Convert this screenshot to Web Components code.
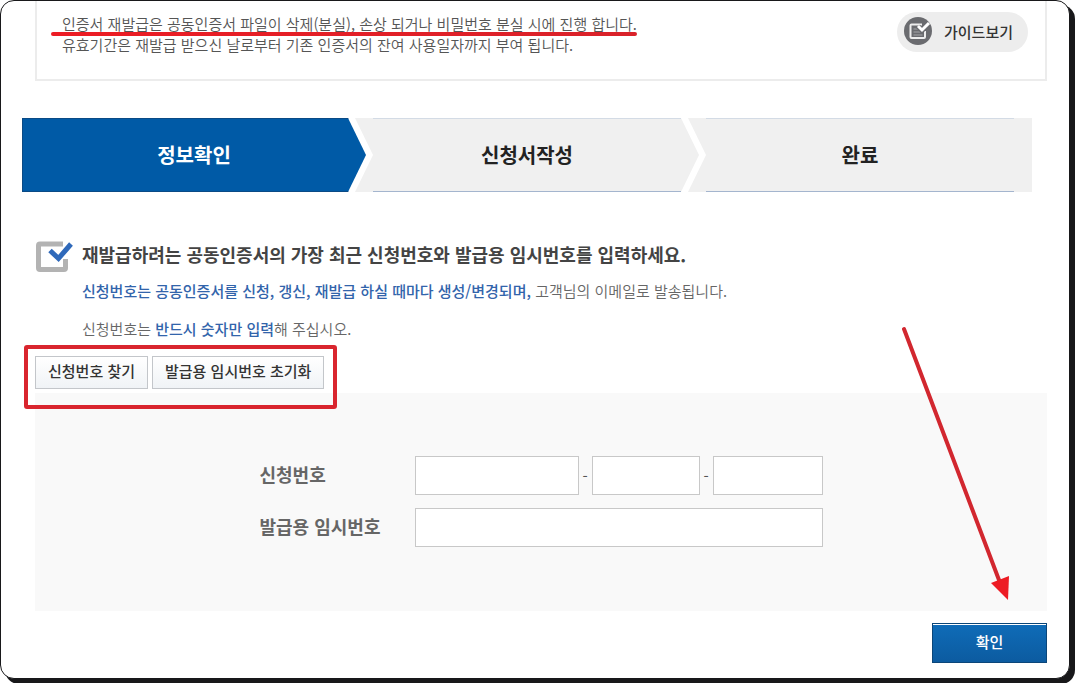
<!DOCTYPE html>
<html lang="ko">
<head>
<meta charset="utf-8">
<meta name="viewport" content="width=device-width, initial-scale=1">
<title>인증서 재발급</title>
<style>
  html { background: #fff; }
  body { margin: 0; font-family: "Noto Sans CJK KR", "Noto Sans", sans-serif; font-size: 15px; line-height: 21px; color: #555; }
</style>
</head>
<body>
<page-sheet>
  <notice-box>
    <marked-line>인증서 재발급은 공동인증서 파일이 삭제(분실), 손상 되거나 비밀번호 분실 시에 진행 합니다.</marked-line>
    <span>유효기간은 재발급 받으신 날로부터 기존 인증서의 잔여 사용일자까지 부여 됩니다.</span>
    <guide-button slot="action">가이드보기</guide-button>
  </notice-box>
  <step-bar>
    <step-item current>정보확인</step-item>
    <step-item>신청서작성</step-item>
    <step-item last>완료</step-item>
  </step-bar>
  <section-intro>
    <span slot="title">재발급하려는 공동인증서의 가장 최근 신청번호와 발급용 임시번호를 입력하세요.</span>
    <span slot="first"><key-text>신청번호는 공동인증서를 신청, 갱신, 재발급 하실 때마다 생성/변경되며,</key-text> 고객님의 이메일로 발송됩니다.</span>
    <span slot="second">신청번호는 <key-text>반드시 숫자만 입력</key-text>해 주십시오.</span>
  </section-intro>
  <tool-group>
    <tool-button>신청번호 찾기</tool-button>
    <tool-button>발급용 임시번호 초기화</tool-button>
  </tool-group>
  <number-form></number-form>
  <confirm-bar>확인</confirm-bar>
</page-sheet>

<script>
const define = (name, html) => {
  const template = document.createElement('template');
  template.innerHTML = html;
  customElements.define(name, class extends HTMLElement {
    constructor() {
      super();
      this.attachShadow({ mode: 'open' }).append(template.content.cloneNode(true));
    }
  });
};

define('page-sheet', `
  <style>
    :host { display: block; box-sizing: border-box; margin: 0 5px 5px 0; padding: 0 22px 15px 21px;
      border: 1px solid #18181a; border-radius: 14px; background: #fff; box-shadow: 5px 5px 0 #18181a; }
  </style>
  <slot></slot>`);

define('notice-box', `
  <style>
    :host { display: flex; align-items: flex-start; justify-content: space-between; box-sizing: border-box;
      min-height: 80px; margin-left: 13px; padding: 11px 17px 11px 25px; border: 2px solid #ececec; border-top: 0; }
    p { display: flex; flex-direction: column; margin: 1px 0 0; font-weight: 350; }
  </style>
  <p><slot></slot></p>
  <slot name="action"></slot>`);

define('marked-line', `
  <style>
    :host { display: block; position: relative; }
    i { position: absolute; left: -11px; right: 0; bottom: -2px; height: 4px; border-radius: 2px;
      background: linear-gradient(90deg, #ed1c24, #d9222a); }
  </style>
  <slot></slot><i></i>`);

define('guide-button', `
  <style>
    :host { display: block; }
    button { display: flex; align-items: center; gap: 12px; height: 40px; padding: 0 15px 2px 7px; border: 0;
      border-radius: 20px; background: #ededed; color: #333; font: inherit; font-weight: 500; cursor: pointer; }
    svg { display: block; }
  </style>
  <button type="button">
    <svg width="28" height="28" viewBox="0 0 28 28" aria-hidden="true">
      <circle cx="14" cy="14" r="14" fill="#6a6b6f"/>
      <path d="M18 7.500H7.500Q6.500 7.500 6.500 8.500V20Q6.500 21 7.500 21H20Q21 21 21 20V14" fill="none" stroke="#ededed" stroke-width="2"/>
      <path d="M9.500 12h5M9.500 15h7M9.500 18h9" stroke="#a5a6a9" stroke-width="1"/>
      <path d="M14 9.500L18 13.500L25 6.500" fill="none" stroke="#6a6b6f" stroke-width="5"/>
      <path d="M14 9L18 13L25 6" fill="none" stroke="#fff" stroke-width="3"/>
    </svg>
    <slot></slot>
  </button>`);

define('step-bar', `
  <style>
    :host { display: flex; height: 74px; margin: 37px 15px 0 0; }
  </style>
  <slot></slot>`);

define('step-item', `
  <style>
    :host { --tip: 18px; position: relative; flex: 1 1 0; display: flex; align-items: center; justify-content: center;
      margin-left: -11px; background: #f0f0f0; color: #222; font-size: 20px; font-weight: 700; line-height: 28px;
      clip-path: polygon(0 0, calc(100% - var(--tip)) 0, 100% 50%, calc(100% - var(--tip)) 100%, 0 100%, var(--tip) 50%); }
    :host([current]) { margin-left: 0; background: #005aa6; color: #fff;
      clip-path: polygon(0 0, calc(100% - var(--tip)) 0, 100% 50%, calc(100% - var(--tip)) 100%, 0 100%); }
    :host([last]) { clip-path: polygon(0 0, 100% 0, 100% 100%, 0 100%, var(--tip) 50%); }
    i { position: absolute; inset: 0 var(--tip); border: solid; border-width: 1px 0; border-color: #d3dbe5 transparent #a4b5ce; }
    :host([current]) i { inset: 0; border-width: 1px 0 1px 1px; border-color: #0a4a85; }
  </style>
  <i></i><slot></slot>`);

define('section-intro', `
  <style>
    :host { display: grid; grid-template-columns: 37px 1fr; column-gap: 9px; margin: 48px 0 0 14px; }
    svg { display: block; margin-top: 1px; }
    h2 { margin: 0 0 12px; font-size: 18px; font-weight: 700; line-height: 28px; color: #444; }
    p { margin: 0; font-weight: 350; line-height: 21px; color: #666; }
    p + p { margin-top: 17px; }
  </style>
  <svg width="37" height="32" viewBox="0 0 37 32" aria-hidden="true">
    <path d="M27 3H4Q2.500 3 2.500 4.500V27Q2.500 28.500 4 28.500H28Q29.500 28.500 29.500 27V18" fill="none" stroke="#b3b3b3" stroke-width="5"/>
    <path d="M14 9.500L22.500 17.500L35 3" fill="none" stroke="#fff" stroke-width="8"/>
    <path d="M14 9.500L22.500 17.500L35 3" fill="none" stroke="#2f69ba" stroke-width="5"/>
  </svg>
  <div>
    <h2><slot name="title"></slot></h2>
    <p><slot name="first"></slot></p>
    <p><slot name="second"></slot></p>
  </div>`);

define('key-text', `
  <style>:host { display: inline; font-weight: 500; color: #3264ab; }</style><slot></slot>`);

define('tool-group', `
  <style>
    :host { display: flex; gap: 4px; position: relative; width: fit-content; margin: 17px 0 0 13px; }
    i { position: absolute; inset: -11px -13px -20px -11px; border: 4px solid #d9252e; border-radius: 3px; pointer-events: none; }
  </style>
  <slot></slot><i></i>`);

define('tool-button', `
  <style>
    :host { display: block; }
    button { height: 33px; padding: 0 12px 4px; border: 1px solid #c3c6ca; background: linear-gradient(#fff, #f0f3f6);
      color: #333; font: inherit; font-weight: 500; line-height: 21px; cursor: pointer; }
  </style>
  <button type="button"><slot></slot></button>`);

define('number-form', `
  <style>
    :host { display: block; margin: 4px 0 0 13px; padding: 63px 0 64px; background: #f9f9f9; }
    form { display: grid; grid-template-columns: 155px 408px; row-gap: 13px; justify-content: center; align-items: center; }
    label { padding-bottom: 3px; font-size: 18px; font-weight: 700; line-height: 28px; color: #666; }
    div { display: grid; grid-template-columns: 164px 13px 108px 13px 110px; align-items: center; text-align: center; }
    input { box-sizing: border-box; width: 100%; height: 39px; padding: 0 10px; border: 1px solid #c8c8c8; border-radius: 0;
      background: #fff; font: inherit; color: #333; }
  </style>
  <form>
    <label for="request">신청번호</label>
    <div>
      <input id="request" type="text" inputmode="numeric"><span>-</span>
      <input type="text" inputmode="numeric" aria-label="신청번호 둘째 자리"><span>-</span>
      <input type="text" inputmode="numeric" aria-label="신청번호 셋째 자리">
    </div>
    <label for="temporary">발급용 임시번호</label>
    <input id="temporary" type="text">
  </form>`);

define('confirm-bar', `
  <style>
    :host { display: flex; justify-content: flex-end; position: relative; margin-top: 12px; }
    button { width: 115px; height: 40px; padding: 0 0 4px; border: 1px solid #0b4679; box-shadow: inset 0 1px 0 #fff;
      background: linear-gradient(#0f6cb8, #0c5ba0); color: #fff; font: inherit; font-weight: 500; cursor: pointer; }
    svg { position: absolute; right: 37px; bottom: 61px; pointer-events: none; }
  </style>
  <button type="button"><slot></slot></button>
  <svg width="110" height="278" viewBox="0 0 110 278" aria-hidden="true">
    <path d="M4 5L99 256" stroke="#d2272f" stroke-width="4" stroke-linecap="round"/>
    <path d="M91 259L109 252L108 276Z" fill="#ed1c24"/>
  </svg>`);
</script>
</body>
</html>
